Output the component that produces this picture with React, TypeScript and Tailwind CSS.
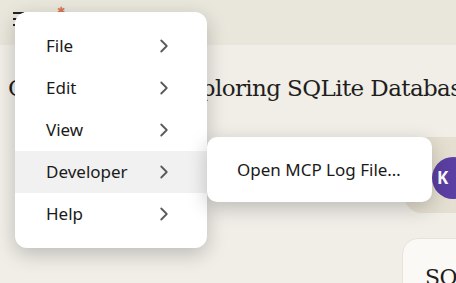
import { ChevronRight } from 'lucide-react';

const items = ['File', 'Edit', 'View', 'Developer', 'Help'];

const App = () => {
  return (
    <div className="relative w-[456px] h-[283px] overflow-hidden bg-[#f0eee7] font-['Noto_Sans',sans-serif]">
      {/* top bar */}
      <div className="h-[45px] bg-[#e9e6dc] flex items-start">
        <div className="ml-[13px] mt-[12px] flex flex-col gap-[4px]">
          <div className="w-[11px] h-[2px] bg-[#222]" />
          <div className="w-[11px] h-[2px] bg-[#222]" />
          <div className="w-[11px] h-[2px] bg-[#222]" />
        </div>
        <div className="ml-[33px] mt-[5px] text-[#d97757] text-[10px] leading-none">✱</div>
      </div>

      {/* title */}
      <div className="pl-[8px] pt-[29px] font-['DejaVu_Serif',serif] text-[23px] leading-[28px] tracking-[-0.6px] text-[#1f1e1d] whitespace-nowrap">
        Claude MCPs: Exploring SQLite Databases
      </div>

      {/* user message bubble */}
      <div className="absolute left-[405px] top-[137px] w-[80px] h-[76px] rounded-[16px] bg-[#e4dfd0]">
        <div className="ml-[27px] mt-[20px] w-[42px] h-[42px] rounded-full bg-[#5b3fa3] flex items-center justify-start pl-[5px] text-white font-bold text-[17px]">
          K
        </div>
      </div>

      {/* reply card */}
      <div className="absolute left-[402px] top-[238px] w-[80px] h-[80px] rounded-[16px] bg-[#faf9f5] border border-[#e6e3da]">
        <div className="pl-[22px] pt-[28px] font-['DejaVu_Serif',serif] text-[22px] leading-none tracking-[-0.5px] text-[#1f1e1d]">SQL</div>
      </div>

      {/* menu */}
      <div className="absolute left-[15px] top-[12px] w-[192px] rounded-[12px] bg-white py-[13px] shadow-[0_6px_20px_rgba(0,0,0,0.22)]">
        {items.map((item) => (
          <div
            key={item}
            className={`h-[42px] flex items-center justify-between pl-[31px] pr-[32px] text-[17px] text-[#1a1a1a] ${
              item === 'Developer' ? 'bg-[#f1f1f1]' : ''
            }`}
          >
            <span>{item}</span>
            <ChevronRight size={22} strokeWidth={2} className="text-[#5a5a5a]" />
          </div>
        ))}
      </div>

      {/* submenu */}
      <div className="absolute left-[207px] top-[137px] w-[225px] h-[65px] rounded-[10px] bg-white flex items-center pl-[30px] text-[17px] text-[#1a1a1a] shadow-[0_6px_20px_rgba(0,0,0,0.22)]">
        Open MCP Log File…
      </div>
    </div>
  );
};

export default App;
